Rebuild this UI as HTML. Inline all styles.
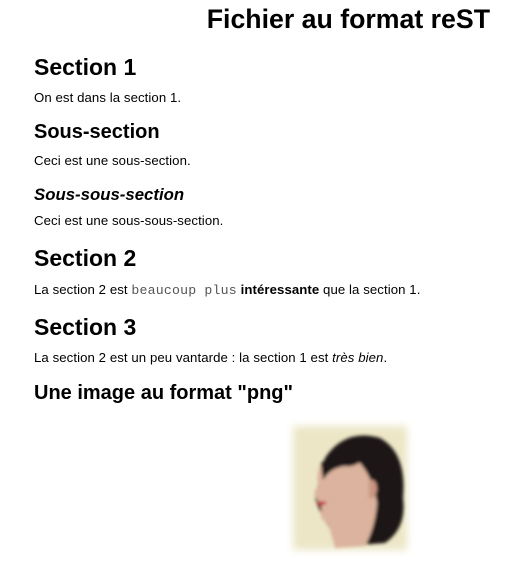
<!DOCTYPE html>
<html><head><meta charset="utf-8"><style>
body{margin:0;width:517px;height:566px;background:#fff;font-family:"Liberation Sans",sans-serif;color:#000;position:relative;overflow:hidden}
.a{position:absolute;white-space:nowrap;margin:0}
.h1{font-size:26.7px;font-weight:bold}
.h2{font-size:23px;font-weight:bold;left:34px}
.h3{font-size:20px;font-weight:bold;left:34px}
.h4{font-size:16.8px;font-weight:bold;font-style:italic;left:34px}
.p{font-size:13.2px;left:34px;letter-spacing:0.08px}
code{font-family:"Liberation Mono",monospace;font-size:13.2px;color:#555;letter-spacing:0.2px}
</style></head><body>
<div class="a h1" style="right:27px;top:4px">Fichier au format reST</div>
<div class="a h2" style="top:54px">Section 1</div>
<div class="a p" style="top:90px">On est dans la section 1.</div>
<div class="a h3" style="top:121px">Sous-section</div>
<div class="a p" style="top:153px">Ceci est une sous-section.</div>
<div class="a h4" style="top:185px">Sous-sous-section</div>
<div class="a p" style="top:213px">Ceci est une sous-sous-section.</div>
<div class="a h2" style="top:245px">Section 2</div>
<div class="a p" style="top:282px">La section 2 est <code>beaucoup plus</code> <b>intéressante</b> que la section 1.</div>
<div class="a h2" style="top:314px">Section 3</div>
<div class="a p" style="top:350px">La section 2 est un peu vantarde : la section 1 est <i>très bien</i>.</div>
<div class="a h3" style="top:382px">Une image au format "png"</div>
<svg class="a" style="left:285px;top:418px" width="130" height="140" viewBox="0 0 130 140">
<defs><filter id="b"><feGaussianBlur stdDeviation="4"/></filter><filter id="s"><feGaussianBlur stdDeviation="1.5"/></filter></defs>
<rect x="8" y="8" width="114" height="124" fill="#ece6c6" filter="url(#b)"/>
<g filter="url(#s)">
<path d="M40 40 Q60 10 95 20 Q122 35 118 80 Q122 110 100 125 L60 128 Q40 110 30 80 Z" fill="#1c1512"/>
<path d="M36 45 Q60 30 75 45 Q88 60 92 85 Q90 110 80 128 L50 130 Q45 110 42 105 Q34 100 36 95 Q38 88 33 83 Q28 76 30 72 L34 68 Q30 60 36 45 Z" fill="#dcb39e"/>
<path d="M36 45 Q55 30 80 40 Q70 50 60 48 Q45 50 38 62 Z" fill="#1c1512"/>
<path d="M84 62 Q92 60 92 72 Q90 82 84 80 Z" fill="#c99682"/>
<path d="M33 84 Q38 82 42 85 Q38 88 33 87 Z" fill="#c0303a"/>
</g>
</svg>
</body></html>
